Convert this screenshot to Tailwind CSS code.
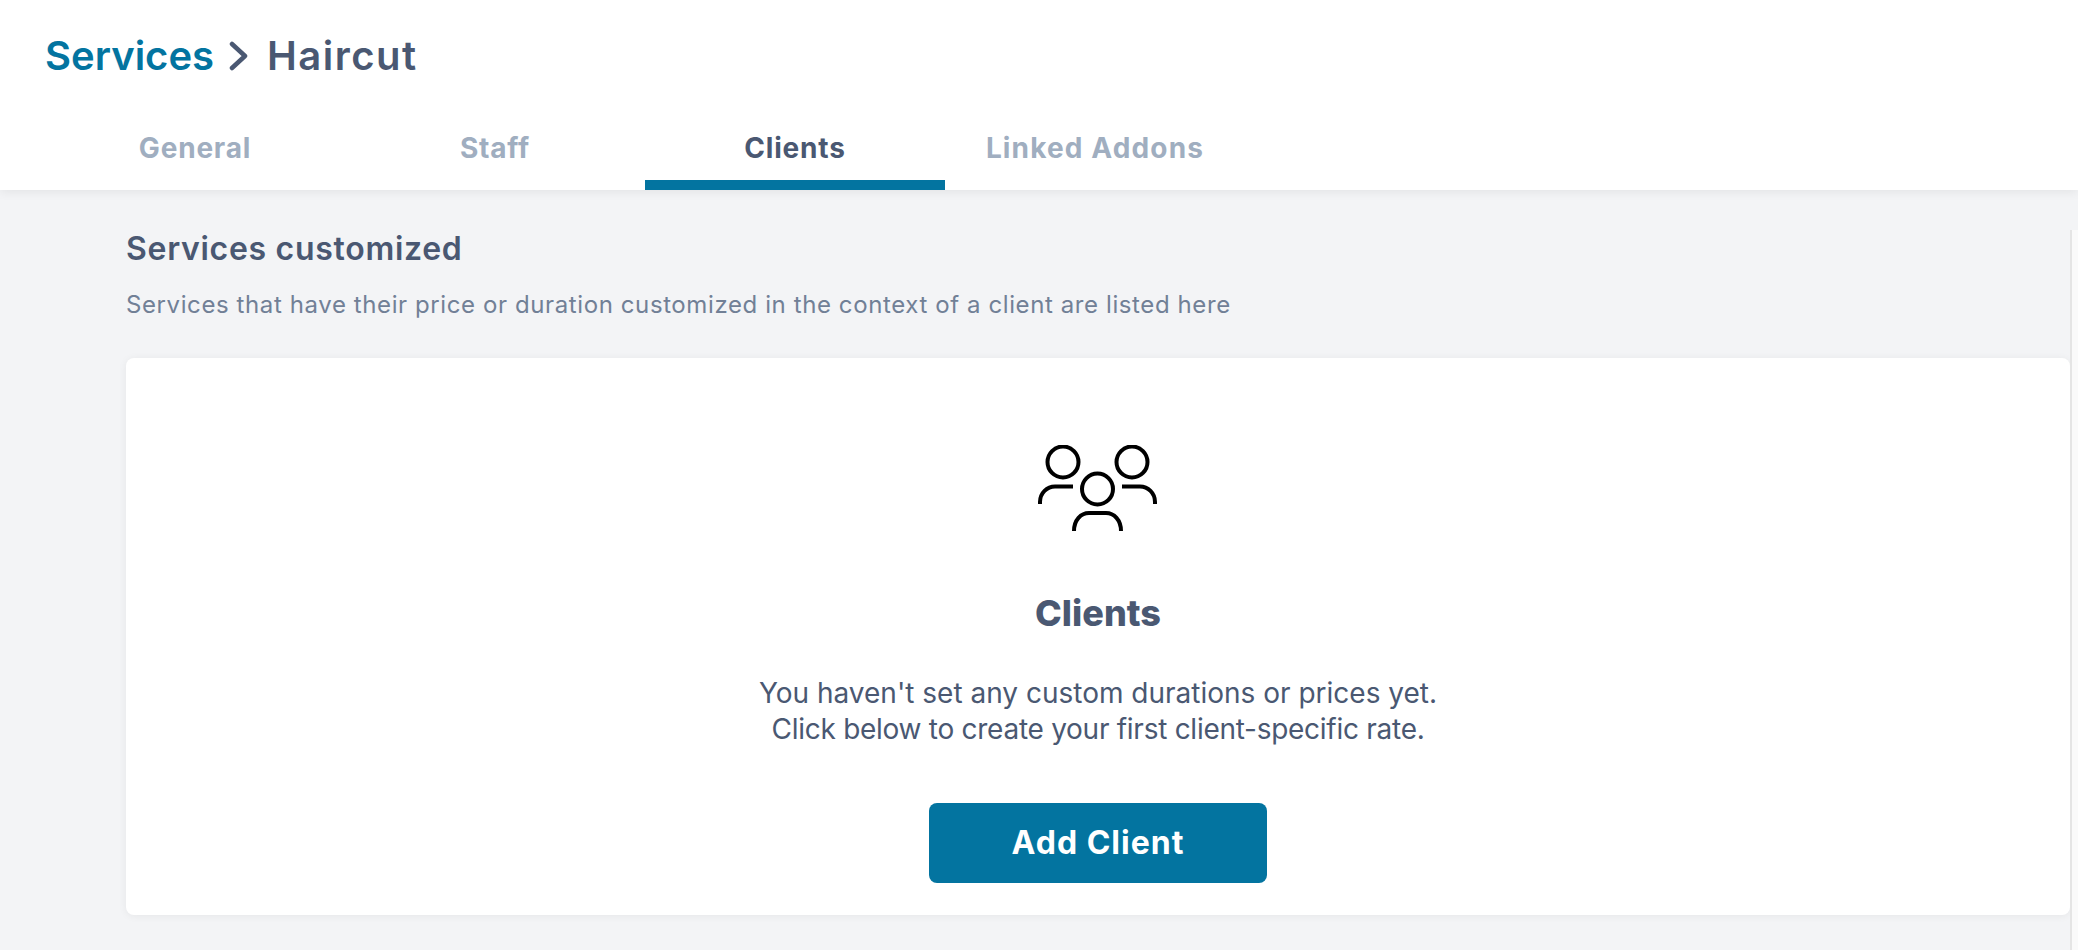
<!DOCTYPE html>
<html lang="en">
<head>
    <meta charset="UTF-8">
    <title>Services - Haircut</title>
    <script src="https://cdn.jsdelivr.net/npm/@tailwindcss/browser@4"></script>
</head>
<body class="h-[950px] overflow-hidden bg-[#f3f4f6] font-['Inter',sans-serif]">
    <!-- Header -->
    <header class="relative z-10 h-[190px] bg-white shadow-[0_2px_10px_rgba(0,0,0,0.07)]">
        <div class="flex h-[112px] items-center gap-[15px] pl-[45px] text-[40px] font-semibold leading-none">
            <span class="text-[#0374a0]">Services</span>
            <svg class="h-[30px] w-[20px] text-[#4a5872]" viewBox="0 0 20 30" fill="none" stroke="currentColor" stroke-width="4.500" stroke-linecap="round" stroke-linejoin="round"><path d="M3 3l13 12L3 27"/></svg>
            <span class="ml-[3px] tracking-[1.5px] text-[#4a5872]">Haircut</span>
        </div>
        <!-- Tabs -->
        <nav class="flex h-[78px] pl-[45px] text-[28px] font-bold tracking-[0.8px]">
            <a class="flex w-[300px] items-center justify-center pt-[4px] pb-[10px] text-[#a0aec0]">General</a>
            <a class="flex w-[300px] items-center justify-center pt-[4px] pb-[10px] text-[#a0aec0]">Staff</a>
            <a class="flex w-[300px] items-center justify-center border-b-[10px] border-[#0374a0] pt-[4px] text-[#4a5872]">Clients</a>
            <a class="flex w-[300px] items-center justify-center pt-[4px] pb-[10px] tracking-[1.15px] text-[#a0aec0]">Linked Addons</a>
        </nav>
    </header>

    <main class="relative h-[760px] pl-[126px] pr-[8px]">
        <!-- Scrollbar track -->
        <div class="absolute right-0 top-[40px] bottom-0 w-[8px] border-l-2 border-[#e5e5e5] bg-[#fafafa]"></div>

        <h2 class="flex h-[77px] items-end pb-[2px] text-[32px] font-semibold leading-none tracking-[0.7px] text-[#4a5872]">Services customized</h2>
        <p class="mt-[22px] text-[24px] leading-[32px] tracking-[0.6px] text-[#718096]">Services that have their price or duration customized in the context of a client are listed here</p>

        <!-- Empty state card -->
        <section class="mt-[37px] flex h-[557px] flex-col items-center rounded-lg bg-white pt-[87px] shadow-[0_1px_8px_rgba(0,0,0,0.06)]">
            <svg class="h-[90px] w-[124px]" viewBox="0 0 124 90" fill="none" stroke="#000" stroke-width="4">
                <circle cx="27" cy="17" r="15.500"/>
                <circle cx="96" cy="17" r="15.500"/>
                <circle cx="61.500" cy="44" r="15.500"/>
                <path d="M4 59v-2c0-9 7-15.500 15-15.500h18"/>
                <path d="M119 59v-2c0-9-7-15.500-15-15.500H86"/>
                <path d="M38 86c0-11 7-18 15-18h17c8 0 15 7 15 18"/>
            </svg>
            <h3 class="mt-[56px] text-[36px] font-extrabold leading-[44px] text-[#4a5872]">Clients</h3>
            <p class="mt-[40px] text-center text-[28px] leading-[36px] text-[#4a5872]">You haven't set any custom durations or prices yet.<br><span class="tracking-[-0.27px]">Click below to create your first client-specific rate.</span></p>
            <button class="mt-[56px] h-[80px] w-[338px] rounded-lg bg-[#0374a0] text-[32px] font-bold tracking-[1px] text-white">Add Client</button>
        </section>
    </main>
</body>
</html>
